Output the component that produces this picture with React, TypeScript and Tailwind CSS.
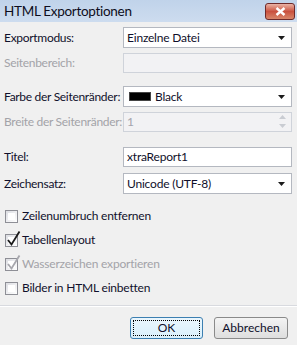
import React from 'react';

const font = { fontFamily: 'Lato, "Liberation Sans", sans-serif' };

const Arrow = () => (
  <svg width="7" height="4" viewBox="0 0 7 4" className="shrink-0">
    <path d="M0 0h7L3.5 4z" fill="#1b1b1b" />
  </svg>
);

const Combo: React.FC<{ children: React.ReactNode }> = ({ children }) => (
  <div className="h-[21px] flex items-center bg-white border border-[#b4b8c0] pl-[3px] pr-[6px]">
    <div className="flex-1 flex items-center text-[12px] tracking-[-0.2px] text-[#0f0f2a]">{children}</div>
    <Arrow />
  </div>
);

const TextBox: React.FC<{ value?: string; disabled?: boolean; spin?: boolean }> = ({ value, disabled, spin }) => (
  <div
    className={`h-[20px] flex items-center pl-[3px] pr-[5px] border ${
      disabled ? 'bg-[#f2f2f4] border-[#cfd3da] text-[#a4a4ac]' : 'bg-white border-[#b4b8c0] text-[#0f0f2a]'
    } text-[12px] tracking-[-0.2px]`}
  >
    <span className="flex-1">{value}</span>
    {spin && (
      <div className="flex flex-col gap-[5px] items-center">
        <svg width="7" height="4" viewBox="0 0 7 4"><path d="M0 4h7L3.5 0z" fill="#c9ccd2" /></svg>
        <svg width="7" height="4" viewBox="0 0 7 4"><path d="M0 0h7L3.5 4z" fill="#c9ccd2" /></svg>
      </div>
    )}
  </div>
);

const Label: React.FC<{ text: string; disabled?: boolean }> = ({ text, disabled }) => (
  <div
    className={`h-[21px] whitespace-nowrap text-[12px] tracking-[-0.3px] flex items-center ${
      disabled ? 'text-[#a3a3a8]' : 'text-[#10102c]'
    }`}
  >
    {text}
  </div>
);

const Check: React.FC<{ label: string; checked?: boolean; disabled?: boolean }> = ({ label, checked, disabled }) => (
  <div className="h-[24px] flex items-center gap-[4px]">
    <div className="relative w-[13px] h-[13px] border border-[#8e8f96] bg-gradient-to-br from-[#dcdde2] to-white">
      <div className="absolute inset-[2px] bg-white" />
      {checked && (
        <svg width="16" height="17" viewBox="0 0 16 17" className="absolute left-[0px] top-[-5px]">
          <path
            d="M2 10 L5.5 14.5 L13.5 1.5"
            fill="none"
            stroke={disabled ? '#a7a7ad' : '#1a1a1a'}
            strokeWidth="1.8"
          />
        </svg>
      )}
    </div>
    <span className={`text-[12px] tracking-[-0.2px] whitespace-nowrap ${disabled ? 'text-[#a3a3a8]' : 'text-[#10102c]'}`}>
      {label}
    </span>
  </div>
);

export default function App() {
  return (
    <div className="w-[297px] h-[345px] bg-[#f0f0f0] flex flex-col overflow-hidden" style={font}>
      {/* title bar */}
      <div className="h-[22px] shrink-0 bg-gradient-to-b from-[#c0d3ea] to-[#cddcef] flex items-center pl-[4px] pr-[2px]">
        <span className="flex-1 text-[13.5px] tracking-[-0.3px] text-[#0d0d20]">HTML Exportoptionen</span>
        <div className="w-[30px] h-[17px] rounded-[3px] border border-[#6e2a2a] bg-gradient-to-b from-[#e9b3a6] via-[#c9513f] to-[#d8866a] flex items-center justify-center">
          <svg width="11" height="9" viewBox="0 0 11 9">
            <path d="M1.5 1 L9.5 8 M9.5 1 L1.5 8" stroke="#ffffff" strokeWidth="2.4" />
          </svg>
        </div>
      </div>

      <div className="flex flex-col pl-[4px] pr-[5px] pt-[5px]">
        <div className="grid grid-cols-[119px_1fr] gap-y-[4px] items-center">
          <Label text="Exportmodus:" />
          <Combo>Einzelne Datei</Combo>
          <Label text="Seitenbereich:" disabled />
          <TextBox disabled />
        </div>
        <div className="grid grid-cols-[119px_1fr] gap-y-[4px] mt-[13px] items-center">
          <Label text="Farbe der Seitenränder:" />
          <Combo>
            <span className="w-[22px] h-[9px] bg-black border border-[#444] mr-[4px] ml-[2px]" />
            Black
          </Combo>
          <Label text="Breite der Seitenränder:" disabled />
          <TextBox value="1" disabled spin />
        </div>
        <div className="grid grid-cols-[119px_1fr] gap-y-[6px] mt-[14px] items-center">
          <Label text="Titel:" />
          <TextBox value="xtraReport1" />
          <Label text="Zeichensatz:" />
          <Combo>Unicode (UTF-8)</Combo>
        </div>

        <div className="flex flex-col mt-[10px] pl-[1px]">
          <Check label="Zeilenumbruch entfernen" />
          <Check label="Tabellenlayout" checked />
          <Check label="Wasserzeichen exportieren" checked disabled />
          <Check label="Bilder in HTML einbetten" />
        </div>
      </div>

      <div className="mt-[5px] border-t border-[#d8dadf] border-b-white border-b" />

      <div className="flex justify-end gap-[11px] pr-[9px] pt-[10px]">
        <button className="w-[73px] h-[22px] rounded-[3px] border border-[#3c7fb1] bg-gradient-to-b from-[#eaf6fd] to-[#d9f0fc] p-[2px] text-[12px] text-[#10102c]">
          <div className="w-full h-full border border-dotted border-black flex items-center justify-center">OK</div>
        </button>
        <button className="w-[74px] h-[22px] rounded-[3px] border border-[#8a8a8a] bg-gradient-to-b from-[#f4f4f4] to-[#dedede] text-[12px] text-[#10102c] flex items-center justify-center">
          Abbrechen
        </button>
      </div>
    </div>
  );
}
